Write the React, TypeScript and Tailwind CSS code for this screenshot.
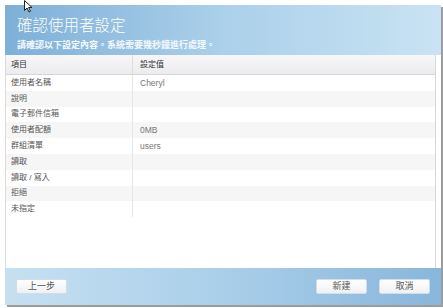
import React from 'react';

const rows: { label: string; value: string }[] = [
  { label: '使用者名稱', value: 'Cheryl' },
  { label: '說明', value: '' },
  { label: '電子郵件信箱', value: '' },
  { label: '使用者配額', value: '0MB' },
  { label: '群組清單', value: 'users' },
  { label: '讀取', value: '' },
  { label: '讀取 / 寫入', value: '' },
  { label: '拒絕', value: '' },
  { label: '未指定', value: '' },
];

const font = { fontFamily: '"Liberation Sans", "Noto Sans CJK TC", sans-serif' };

const Button: React.FC<{ label: string }> = ({ label }) => (
  <button className="h-[15px] w-[51px] rounded-[2px] border border-[#d3dde6] bg-gradient-to-b from-white to-[#eef1f4] text-[9px] leading-none text-[#555]">
    {label}
  </button>
);

const App: React.FC = () => {
  return (
    <div className="relative h-[308px] w-[443px] bg-white pl-[5px] pt-[5px]" style={font}>
      <div className="flex h-[300px] w-[436px] flex-col bg-white shadow-[2px_2px_0_#9c9c9c]">
        {/* header */}
        <div className="flex h-[50px] flex-col bg-gradient-to-r from-[#7eafd8] via-[#abd0ea] to-[#c9e3f3] pl-[12px] pt-[10px] text-white">
          <div className="text-[15.5px] font-light leading-[22px]">確認使用者設定</div>
          <div className="mt-[3px] text-[9px] font-bold leading-[11px] text-[#f4f9fd]">請確認以下設定內容。系統需要幾秒鐘進行處理。</div>
        </div>

        {/* table */}
        <div className="flex flex-1 flex-col border-l border-[#dcdcdc]">
          <div className="mr-[5px] flex flex-1 flex-col border-r border-[#d8d8d8]">
            <div className="flex h-[20px] items-center border-b border-[#d6d6d6] bg-gradient-to-b from-[#f7f7f8] to-[#ececef] text-[8px] text-[#333]">
              <div className="flex h-full w-[127px] items-center border-r border-[#dedede] pl-[5px]">項目</div>
              <div className="pl-[7px]">設定值</div>
            </div>
            {rows.map((r, i) => (
              <div
                key={r.label}
                className={`flex h-[15.8px] items-center text-[8px] text-[#555] ${i % 2 === 1 ? 'bg-[#f6f6f7]' : 'bg-white'}`}
              >
                <div className="flex h-full w-[127px] items-center border-r border-[#e6e6e6] pl-[5px]">{r.label}</div>
                <div className="pl-[7px] text-[8.5px] text-[#777]">{r.value}</div>
              </div>
            ))}
            <div className="flex-1" />
          </div>
        </div>

        {/* footer */}
        <div className="flex h-[37px] items-center bg-gradient-to-r from-[#c6e0f1] via-[#aacfea] to-[#88b6dc] px-[11px]">
          <Button label="上一步" />
          <div className="flex-1" />
          <Button label="新建" />
          <div className="w-[12px]" />
          <Button label="取消" />
        </div>
      </div>

      {/* mouse pointer */}
      <svg className="absolute left-[24px] top-0" width="9" height="13" viewBox="0 0 9 13">
        <path d="M0.5 0.5 L0.5 10.5 L3 8 L5 12 L6.5 11.3 L4.6 7.5 L8 7.5 Z" fill="white" stroke="#222" strokeWidth="1" />
      </svg>
    </div>
  );
};

export default App;
